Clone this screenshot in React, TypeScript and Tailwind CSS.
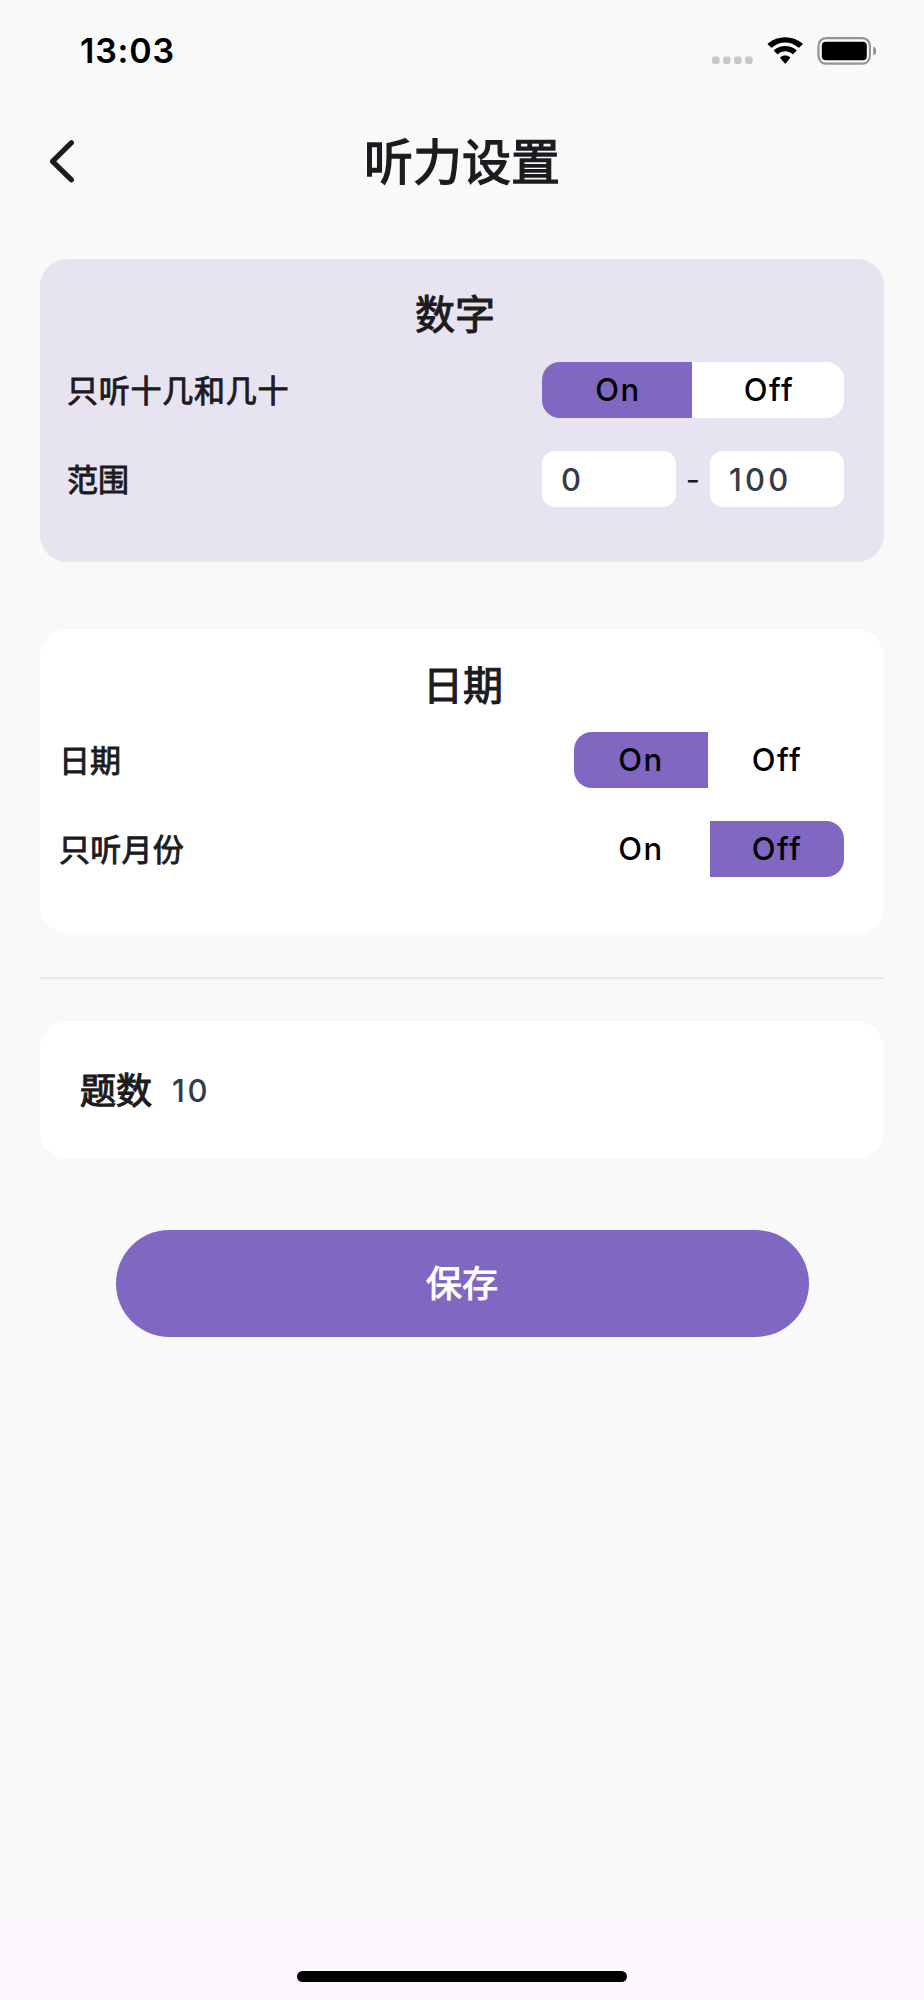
import clsx from "clsx";
import { useState } from "react";

const StatusBar = () => (
  <div className="flex h-[100px] items-center justify-between pl-20 pr-[48px] pt-[2px]">
    <span className="text-[34px] leading-[40px] font-semibold tracking-[0.8px] text-black">
      13:03
    </span>
    <svg className="-mt-[1px]" width="164" height="28" viewBox="0 0 164 28" fill="none">
      {/* NO SIGNAL DOTS  */}
      <g fill="#c8c8c8">
        <rect x="0" y="19.500" width="7.500" height="7.500" rx="2.200" />
        <rect x="11" y="19.500" width="7.500" height="7.500" rx="2.200" />
        <rect x="22" y="19.500" width="7.500" height="7.500" rx="2.200" />
        <rect x="33.200" y="19.500" width="7.500" height="7.500" rx="2.200" />
      </g>
      {/* WIFI  */}
      <g fill="#000">
        <path d="M73.2 5.5c4.9 0 9.5 1.9 13.1 5.1.3.3.7.3 1 0l3.2-3a.8.8 0 0 0 0-1.1C80.500-1.900 65.900-1.900 55.900 6.500a.8.8 0 0 0 0 1.100l3.200 3c.3.3.7.3 1 0 3.600-3.300 8.200-5.100 13.100-5.100z" />
        <path d="M73.200 14.300c2.600 0 5.100 1 7.100 2.700.3.300.700.300 1 0l3-2.900a.8.8 0 0 0 0-1.100c-6.300-5.300-15.900-5.300-22.200 0a.8.8 0 0 0 0 1.100l3 2.900c.3.300.700.300 1 0 2-1.800 4.500-2.700 7.100-2.700z" />
        <path d="M77.900 21.300a.8.800 0 0 0 0-1.200c-2.700-2.200-6.700-2.200-9.400 0a.8.800 0 0 0 0 1.200l4.100 5a.8.8 0 0 0 1.200 0z" />
      </g>
      {/* BATTERY  */}
      <rect x="106.500" y="1.200" width="51.400" height="25.400" rx="7.500" stroke="#949494" strokeWidth="2.200" />
      <rect x="109.800" y="4.700" width="45" height="18.600" rx="4" fill="#000" />
      <path d="M161.300 9.500v9c1.700-.8 2.900-2.500 2.900-4.500s-1.200-3.700-2.900-4.500z" fill="#8a8a8a" />
    </svg>
  </div>
);

const Toggle = ({
  defaultOn,
  wide,
}: {
  defaultOn: boolean;
  wide?: boolean;
}) => {
  const [on, setOn] = useState(defaultOn);
  const item =
    "h-14 pt-[1px] text-[31px] font-medium tracking-[1.5px] text-black";
  return (
    <div className={clsx("flex", !wide && "gap-[2px]")}>
      <button
        className={clsx(
          item,
          "rounded-l-[18px]",
          wide ? "w-[150px] pl-[2px]" : "w-[134px]",
          on ? "bg-[#7f67c2]" : "bg-white"
        )}
        onClick={() => setOn(true)}
      >
        On
      </button>
      <button
        className={clsx(
          item,
          "rounded-r-[18px]",
          wide ? "w-[152px] pl-[2px]" : "w-[134px]",
          on ? "bg-white" : "bg-[#7f67c2]"
        )}
        onClick={() => setOn(false)}
      >
        Off
      </button>
    </div>
  );
};

const RangeInput = ({ value }: { value: string }) => (
  <input
    className="h-14 w-[134px] rounded-[13px] bg-white pt-[2px] pl-[19px] text-[31px] font-medium tracking-[3.2px] text-[#353b47] outline-none"
    defaultValue={value}
  />
);

const labelClass = "pt-[3px] text-[31px] [-webkit-text-stroke:0.9px]";
const cardTitleClass =
  "pt-[32px] text-center text-[40px] leading-[48px] [-webkit-text-stroke:1.1px]";

export default function App() {
  return (
    <div
      lang="zh-CN"
      className="flex h-[2000px] w-[924px] flex-col bg-[#f9f9f9] font-['Inter','Noto_Sans_CJK_SC',sans-serif] text-[#1c1b20]"
    >
      <StatusBar />

      {/* HEADER  */}
      <header className="grid h-[123px] grid-cols-[100px_1fr_100px] items-center">
        <button className="pl-[48px]" aria-label="返回">
          <svg width="28" height="46" viewBox="0 0 28 46" fill="none">
            <path
              d="M23.500 3.700 4.500 22.300l19 18.500"
              stroke="#1c1b20"
              strokeWidth="5.200"
              strokeLinecap="round"
              strokeLinejoin="round"
            />
          </svg>
        </button>
        <h1 className="pt-[3px] text-center text-[49px] leading-[60px] [-webkit-text-stroke:1.4px]">
          听力设置
        </h1>
      </header>

      <main className="flex flex-1 flex-col px-[40px] pt-[36px]">
        {/* NUMBERS  */}
        <section className="h-[303px] rounded-[27px] bg-[#e7e3f1]">
          <h2 className={clsx(cardTitleClass, "pr-[14px]")}>数字</h2>
          <div className="mt-[22.500px] flex h-14 items-center justify-between pl-[27px] pr-[40px]">
            <span className={clsx(labelClass, "tracking-[0.75px]")}>只听十几和几十</span>
            <Toggle defaultOn wide />
          </div>
          <div className="mt-[33px] flex h-14 items-center justify-between pl-[27px] pr-[40px]">
            <span className={labelClass}>范围</span>
            <div className="flex w-[302px] items-center justify-between">
              <RangeInput value="0" />
              <span className="pt-[3px] text-[31px] leading-[40px]">-</span>
              <RangeInput value="100" />
            </div>
          </div>
        </section>

        {/* DATES  */}
        <section className="mt-[67.500px] h-[303px] rounded-[27px] bg-white">
          <h2 className={clsx(cardTitleClass, "pl-[2px]")}>日期</h2>
          <div className="mt-[22.500px] flex h-14 items-center justify-between pl-[19px] pr-[40px]">
            <span className={labelClass}>日期</span>
            <Toggle defaultOn />
          </div>
          <div className="mt-[33px] flex h-14 items-center justify-between pl-[19px] pr-[40px]">
            <span className={clsx(labelClass, "tracking-[0.25px]")}>只听月份</span>
            <Toggle defaultOn={false} />
          </div>
        </section>

        <hr className="mt-11 border-t-2 border-[#e9e8f5]" />

        {/* QUESTION COUNT  */}
        <section className="mt-[43px] flex h-[136px] items-center gap-5 rounded-[27px] bg-white pl-[40px] pt-[2px]">
          <span className="text-[36px] [-webkit-text-stroke:1.200px]">题数</span>
          <span className="pt-[2px] text-[31px] font-medium tracking-[2.500px] text-[#353b47]">10</span>
        </section>

        <button className="mx-auto mt-[72px] h-[107px] w-[693px] rounded-full bg-[#7f67c2] pt-[2px] text-[36px] text-white [-webkit-text-stroke:1px]">
          保存
        </button>
      </main>

      {/* HOME INDICATOR  */}
      <footer className="flex h-[76px] justify-center bg-[#fef7ff] pt-[47px]">
        <div className="h-[11px] w-[330px] rounded-full bg-black" />
      </footer>
    </div>
  );
}
